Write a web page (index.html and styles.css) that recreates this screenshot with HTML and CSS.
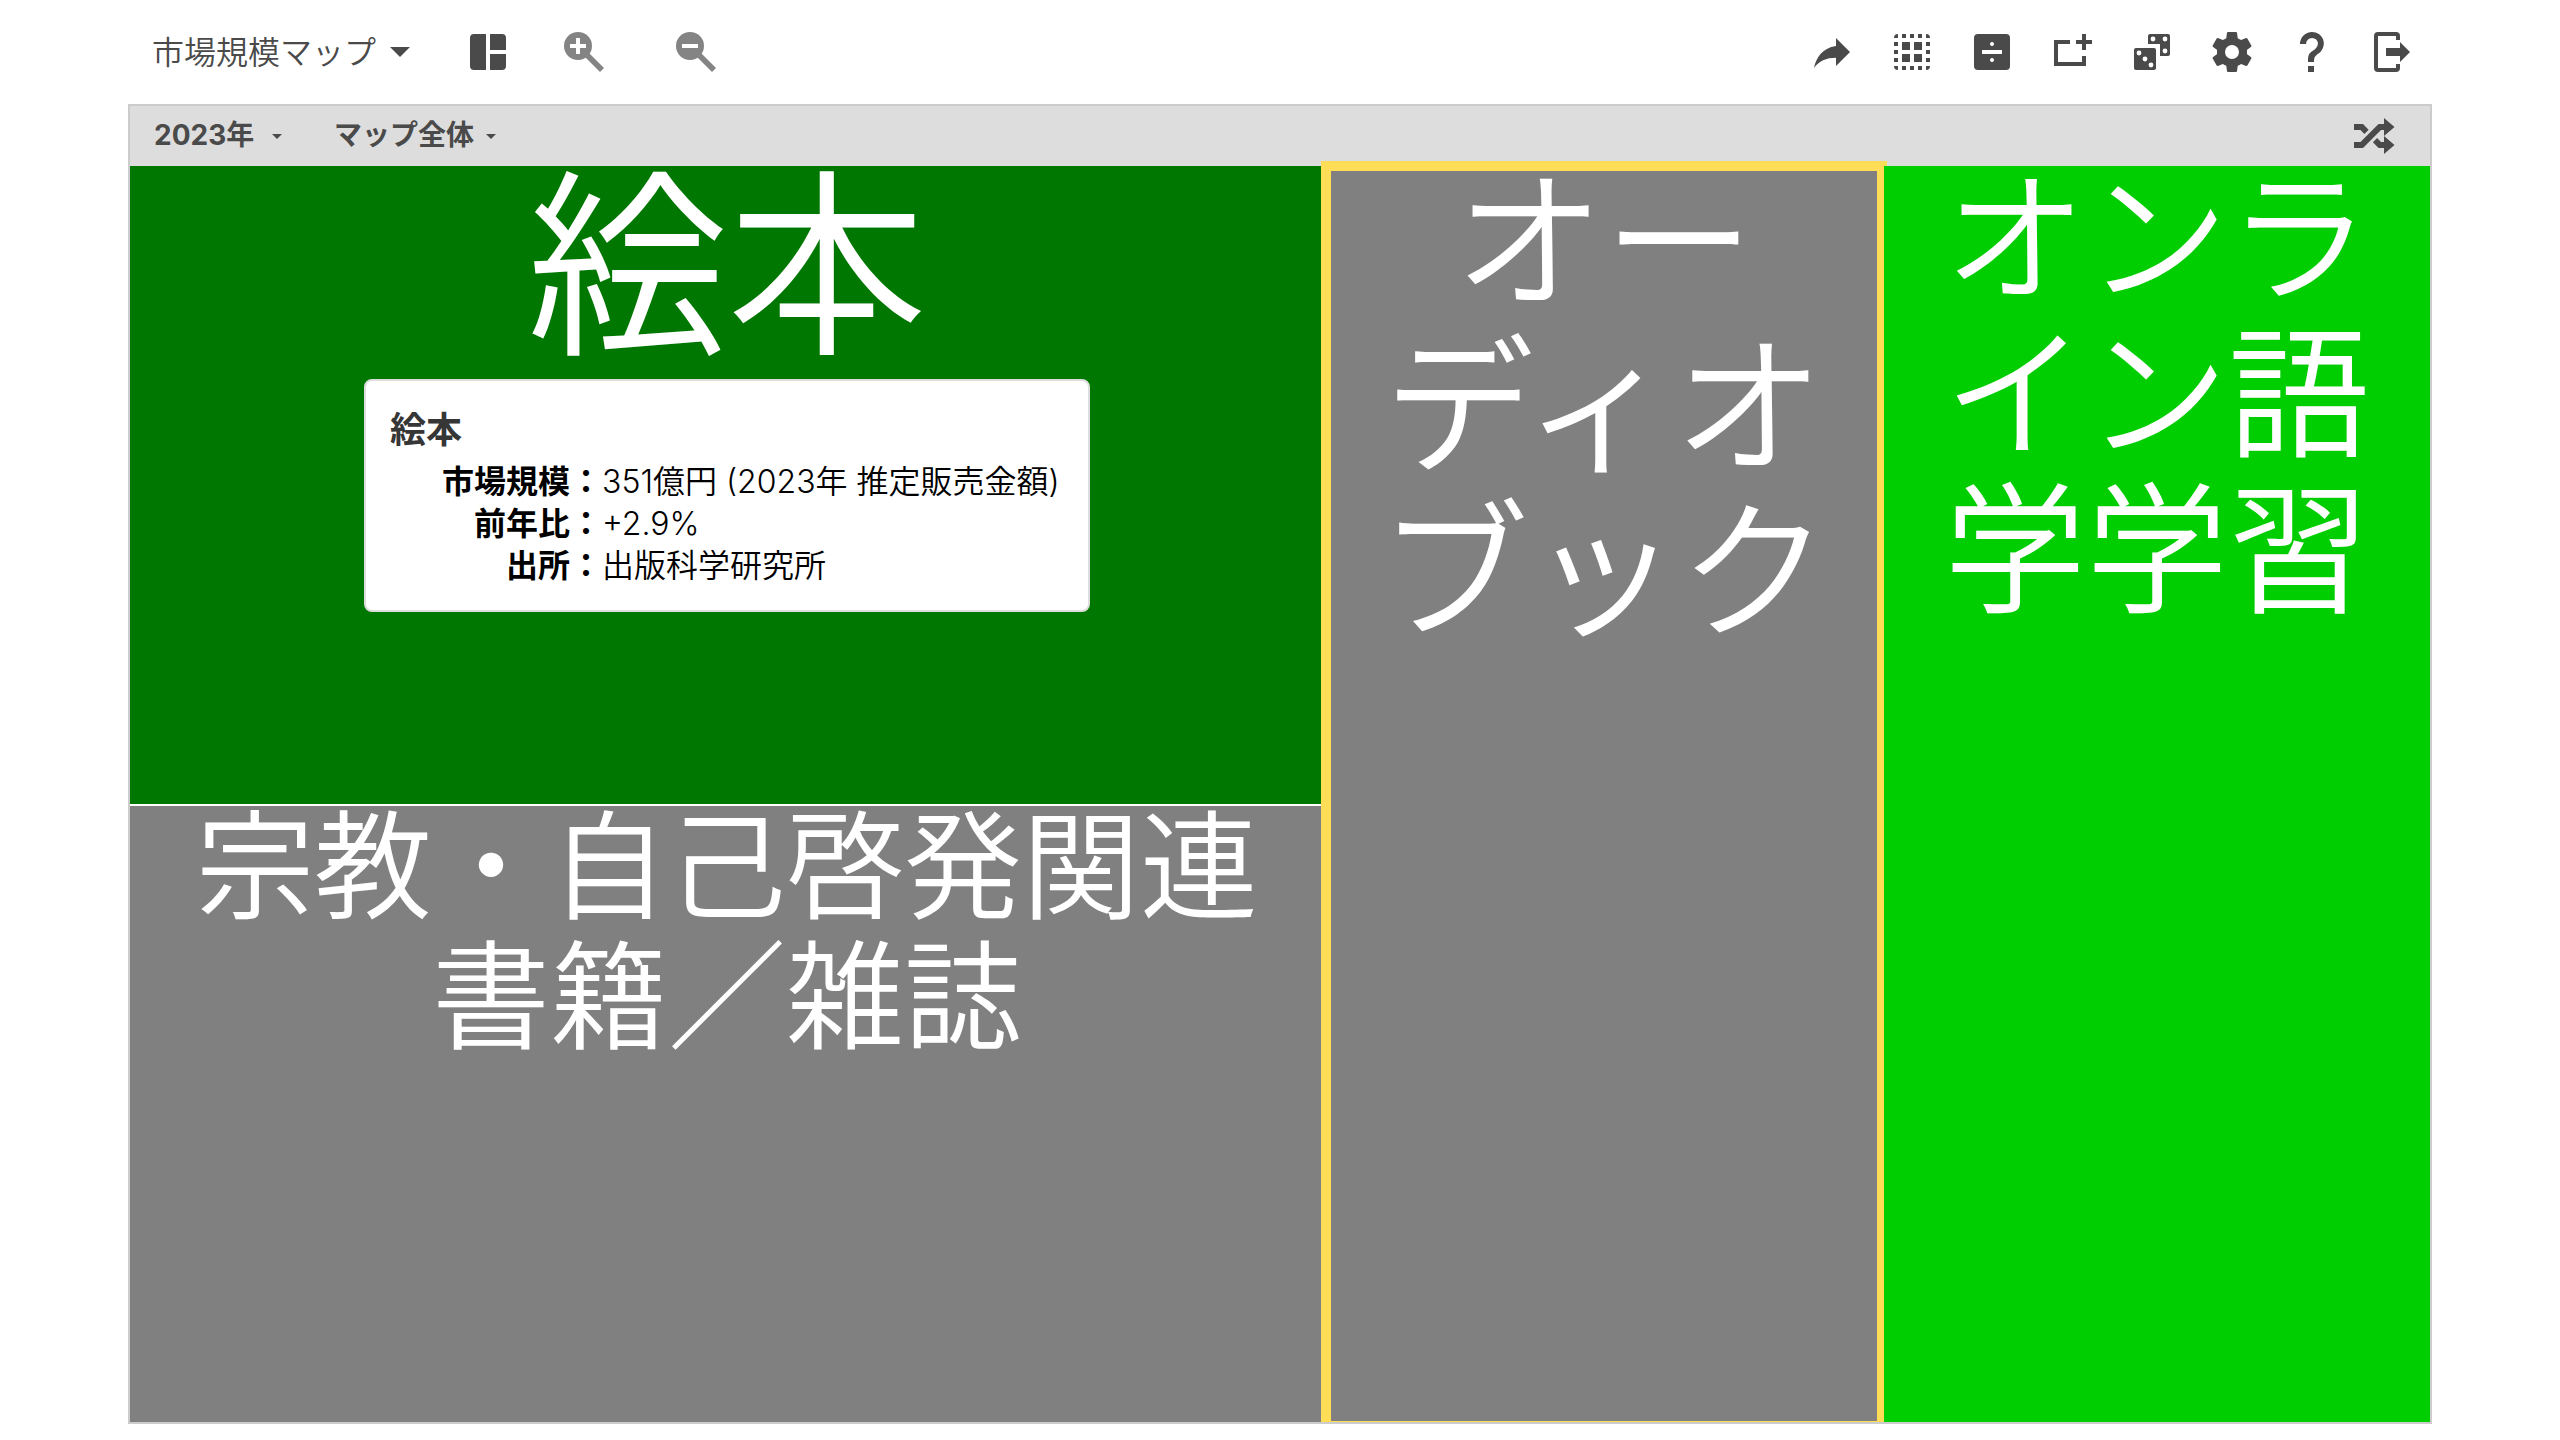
FILE: index.html
```html
<!DOCTYPE html>
<html lang="ja">
<head>
<meta charset="utf-8">
<title>市場規模マップ</title>
<link rel="stylesheet" href="styles.css">
</head>
<body>
<div class="app">
  <header class="toolbar">
    <button class="map-title" type="button"><span class="button-text">市場規模マップ</span>
      <svg class="caret" viewBox="0 0 20 10" aria-hidden="true"><path d="M0 0H20L10 10Z"/></svg>
    </button>
    <button class="tool tool-layout" type="button" aria-label="レイアウト">
      <svg class="icon" viewBox="0 0 24 24"><path d="M11 21H5a2 2 0 0 1-2-2V5a2 2 0 0 1 2-2h6zM13 21h6a2 2 0 0 0 2-2v-6h-8zM21 11V5a2 2 0 0 0-2-2h-6v8z"/></svg>
    </button>
    <button class="tool tool-zoom" type="button" aria-label="拡大" disabled>
      <svg class="icon" viewBox="0 0 24 24"><circle cx="9" cy="9" r="7"/><path d="M12 14L14 12L22 20L20 22Z"/><path class="sign" d="M5 8h8v2H5zM8 5h2v8H8z"/></svg>
    </button>
    <button class="tool tool-zoom" type="button" aria-label="縮小" disabled>
      <svg class="icon" viewBox="0 0 24 24"><circle cx="9" cy="9" r="7"/><path d="M12 14L14 12L22 20L20 22Z"/><path class="sign" d="M5 8h8v2H5z"/></svg>
    </button>
    <nav class="actions">
      <button class="tool" type="button" aria-label="共有">
        <svg class="icon" viewBox="0 0 24 24"><path d="M21 12L14 5V9C7 10 4 15 3 20C5.500 16.500 9 14.900 14 14.900V19Z"/></svg>
      </button>
      <button class="tool" type="button" aria-label="すべて選択">
        <svg class="icon" viewBox="0 0 24 24"><path d="M7 7h4v4H7zM13 7h4v4h-4zM7 13h4v4H7zM13 13h4v4h-4zM15 5h2V3h-2zM15 21h2v-2h-2zM19 17h2v-2h-2zM19 9h2V7h-2zM19 21a2 2 0 0 0 2-2h-2zM19 13h2v-2h-2zM11 21h2v-2h-2zM9 3H7v2h2zM3 17h2v-2H3zM5 21v-2H3a2 2 0 0 0 2 2zM19 3v2h2a2 2 0 0 0-2-2zM13 3h-2v2h2zM3 9h2V7H3zM7 21h2v-2H7zM3 13h2v-2H3zM3 5h2V3a2 2 0 0 0-2 2z"/></svg>
      </button>
      <button class="tool" type="button" aria-label="分割">
        <svg class="icon" viewBox="0 0 24 24"><rect x="3" y="3" width="18" height="18" rx="2"/><path class="hole" d="M7 11h10v2H7z"/><circle class="hole" cx="12" cy="8" r="1"/><circle class="hole" cx="12" cy="16" r="1"/></svg>
      </button>
      <button class="tool" type="button" aria-label="枠を追加">
        <svg class="icon" viewBox="0 0 24 24"><path d="M3 6h8v2H5v9h12v-3h2v5H3zM17 3h2v3h3v2h-3v3h-2V8h-3V6h3z"/></svg>
      </button>
      <button class="tool" type="button" aria-label="ランダム">
        <svg class="icon" viewBox="0 0 24 24"><rect x="3" y="10" width="11" height="11" rx="1"/><path d="M11 3h9a1 1 0 0 1 1 1v9a1 1 0 0 1-1 1h-4V8h-6V4a1 1 0 0 1 1-1z"/><g class="hole"><circle cx="5.500" cy="12.500" r="1.200"/><circle cx="8.500" cy="15.500" r="1.200"/><circle cx="11.500" cy="18.500" r="1.200"/><circle cx="12.500" cy="5.500" r="1.200"/><circle cx="18.500" cy="5.500" r="1.200"/><circle cx="18.500" cy="11.500" r="1.200"/></g></svg>
      </button>
      <button class="tool" type="button" aria-label="設定">
        <svg class="icon" viewBox="0 0 24 24"><path d="M12,15.5A3.5,3.5 0 0,1 8.5,12A3.5,3.5 0 0,1 12,8.5A3.5,3.5 0 0,1 15.5,12A3.5,3.5 0 0,1 12,15.5M19.43,12.97C19.47,12.65 19.5,12.33 19.5,12C19.5,11.67 19.47,11.34 19.43,11L21.54,9.37C21.73,9.22 21.78,8.95 21.66,8.73L19.66,5.27C19.54,5.05 19.27,4.96 19.05,5.05L16.56,6.05C16.04,5.66 15.5,5.32 14.87,5.07L14.5,2.42C14.46,2.18 14.25,2 14,2H10C9.75,2 9.54,2.18 9.5,2.42L9.13,5.07C8.5,5.32 7.96,5.66 7.44,6.05L4.95,5.05C4.73,4.96 4.46,5.05 4.34,5.27L2.34,8.73C2.21,8.95 2.27,9.22 2.46,9.37L4.57,11C4.53,11.34 4.5,11.67 4.5,12C4.5,12.33 4.53,12.65 4.57,12.97L2.46,14.63C2.27,14.78 2.21,15.05 2.34,15.27L4.34,18.73C4.46,18.95 4.73,19.03 4.95,18.95L7.44,17.94C7.96,18.34 8.5,18.68 9.13,18.93L9.5,21.58C9.54,21.82 9.75,22 10,22H14C14.25,22 14.46,21.82 14.5,21.58L14.87,18.93C15.5,18.67 16.04,18.34 16.56,17.94L19.05,18.95C19.27,19.03 19.54,18.95 19.66,18.73L21.66,15.27C21.78,15.05 21.73,14.78 21.54,14.63L19.43,12.97Z"/></svg>
      </button>
      <button class="tool" type="button" aria-label="ヘルプ">
        <svg class="icon" viewBox="0 0 24 24"><path d="M10,19H13V22H10V19M12,2C17.35,2.22 19.68,7.62 16.5,11.67C15.67,12.67 14.33,13.33 13.67,14.17C13,15 13,16 13,17H10C10,15.33 10,13.92 10.67,12.92C11.33,11.92 12.67,11.33 13.5,10.67C15.92,8.43 15.32,5.26 12,5A3,3 0 0,0 9,8H6A6,6 0 0,1 12,2Z"/></svg>
      </button>
      <button class="tool" type="button" aria-label="終了">
        <svg class="icon" viewBox="0 0 24 24"><path d="M5 2h9a2 2 0 0 1 2 2v2h-2V4H5v16h9v-2h2v2a2 2 0 0 1-2 2H5a2 2 0 0 1-2-2V4a2 2 0 0 1 2-2zM9 10h7V7l5 5l-5 5v-3H9z"/></svg>
      </button>
    </nav>
  </header>

  <main class="panel">
    <div class="filter-bar">
      <button class="filter" type="button"><span class="button-text">2023年</span>
        <svg class="caret-small" viewBox="0 0 10 5" aria-hidden="true"><path d="M0 0H10L5 5Z"/></svg>
      </button>
      <button class="filter" type="button"><span class="button-text">マップ全体</span>
        <svg class="caret-small" viewBox="0 0 10 5" aria-hidden="true"><path d="M0 0H10L5 5Z"/></svg>
      </button>
      <button class="tool tool-shuffle" type="button" aria-label="シャッフル">
        <svg class="icon" viewBox="0 0 24 24"><path d="M17,3L22.25,7.5L17,12L22.25,16.5L17,21V18H14.26L11.44,15.18L13.56,13.06L15.5,15H17V12L17,9H15.5L6.5,18H2V15H5.26L14.26,6H17V3M2,6H6.5L9.32,8.82L7.2,10.94L5.26,9H2V6Z"/></svg>
      </button>
    </div>
    <div class="treemap">
      <div class="column">
        <section class="tile tile-picture">
          <h2 class="label label-xl">絵本</h2>
          <div class="tooltip" role="tooltip">
            <h3 class="tooltip-title">絵本</h3>
            <dl class="facts">
              <dt>市場規模：</dt><dd>351億円 (2023年 推定販売金額)</dd>
              <dt>前年比：</dt><dd>+2.9%</dd>
              <dt>出所：</dt><dd>出版科学研究所</dd>
            </dl>
          </div>
        </section>
        <section class="tile tile-religion">
          <h2 class="label label-s">宗教・自己啓発関連<br>書籍／雑誌</h2>
        </section>
      </div>
      <section class="tile tile-audio">
        <h2 class="label label-l">オー<br>ディオ<br>ブック</h2>
      </section>
      <section class="tile tile-online">
        <h2 class="label label-m">オンラ<br>イン語<br>学学習</h2>
      </section>
    </div>
  </main>
</div>
</body>
</html>
```
FILE: styles.css
```css
* {
  box-sizing: border-box;
}

body {
  margin: 0;
  background: #fff;
  color: #4a4a4a;
  font-family: Inter, "Noto Sans CJK JP", sans-serif;
}

button {
  padding: 0;
  border: 0;
  background: none;
  color: inherit;
  font: inherit;
}

h2,
h3,
dl,
dd {
  margin: 0;
}

svg {
  display: block;
  fill: currentColor;
}

.app {
  display: flex;
  flex-direction: column;
  width: 90%;
  min-height: 100vh;
  margin: 0 auto;
  padding-bottom: 16px;
}

/* Toolbar */

.toolbar {
  display: flex;
  align-items: center;
  height: 104px;
  padding: 0 16px 0 24px;
}

.map-title {
  display: flex;
  align-items: center;
  gap: 14px;
  margin-right: 54px;
  font-size: 32px;
  font-weight: 350;
}

.button-text {
  padding-bottom: 4px;
}

.caret {
  width: 20px;
  height: 10px;
}

.icon {
  width: 48px;
  height: 48px;
}

.tool-zoom {
  margin-left: 48px;
  color: #848484;
}

.tool-zoom + .tool-zoom {
  margin-left: 64px;
}

.sign,
.hole {
  fill: #fff;
}

.actions {
  display: flex;
  gap: 32px;
  margin-left: auto;
}

/* Map panel */

.panel {
  flex: 1;
  display: flex;
  flex-direction: column;
  border: 2px solid #ccc;
}

.filter-bar {
  display: flex;
  align-items: center;
  gap: 52px;
  height: 60px;
  padding: 0 32px 0 24px;
  background: #ddd;
}

.filter {
  display: flex;
  align-items: center;
  justify-content: space-between;
  gap: 12px;
  min-width: 128px;
  font-size: 28px;
  font-weight: 700;
}

.filter .button-text {
  padding-bottom: 6px;
}

.caret-small {
  width: 10px;
  height: 5px;
}

.tool-shuffle {
  margin-left: auto;
}

.treemap {
  flex: 1;
  display: grid;
  grid-template-columns: 1194fr 556fr 546fr;
  gap: 2px;
}

.column {
  display: grid;
  grid-template-rows: 638fr 616fr;
  gap: 2px;
}

.tile {
  position: relative;
  background: #808080;
  color: #fff;
  text-align: center;
}

.tile-picture {
  background: #070;
}

.tile-audio {
  z-index: 1;
}

.tile-audio::after {
  content: "";
  position: absolute;
  inset: -5px -5px 0;
  border: 10px solid #ffdd57;
  border-bottom-width: 1px;
}

.tile-online {
  z-index: 2;
  background: #00ce00;
}

.label {
  font-family: "Noto Sans CJK JP", sans-serif;
  font-weight: 350;
  line-height: 1.1;
  white-space: nowrap;
}

.label-xl {
  margin-top: -24px;
  font-size: 200px;
}

.label-l {
  margin-top: -18px;
  font-size: 150px;
}

.label-m {
  margin-top: -16px;
  font-size: 142px;
}

.label-s {
  margin-top: -12px;
  font-size: 118px;
}

/* Tooltip */

.tooltip {
  position: absolute;
  top: 213px;
  left: 50%;
  transform: translateX(-50%);
  min-width: 726px;
  padding: 24px 24px 23px;
  border: 2px solid #ddd;
  border-radius: 8px;
  background: #fff;
  color: #000;
  text-align: left;
  white-space: nowrap;
}

.tooltip-title {
  color: #363636;
  font-size: 36px;
  font-weight: 600;
  line-height: 50px;
}

.facts {
  display: grid;
  grid-template-columns: 212px auto;
  padding-top: 6px;
  font-size: 32px;
  line-height: 42px;
}

.facts dt {
  font-weight: 700;
  text-align: right;
}

.facts dd {
  font-weight: 350;
}
```
